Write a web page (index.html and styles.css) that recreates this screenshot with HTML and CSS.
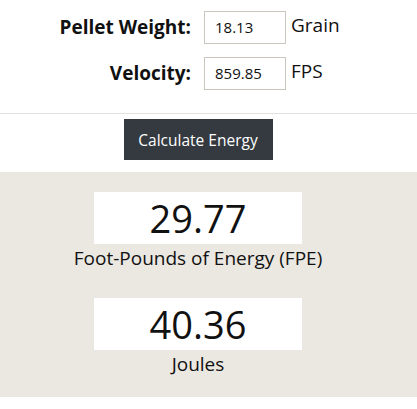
FILE: index.html
```html
<!DOCTYPE html>
<html>
<head>
<meta charset="utf-8">
<link rel="stylesheet" href="styles.css">
</head>
<body>
<div class="form">
  <div class="row">
    <label class="lbl">Pellet Weight:</label>
    <div class="inp">18.13</div>
    <span class="unit">Grain</span>
  </div>
  <div class="row">
    <label class="lbl">Velocity:</label>
    <div class="inp">859.85</div>
    <span class="unit">FPS</span>
  </div>
</div>
<div class="actions">
  <button class="btn">Calculate Energy</button>
</div>
<div class="results">
  <div class="result">
    <div class="value">29.77</div>
    <div class="caption">Foot-Pounds of Energy (FPE)</div>
  </div>
  <div class="result">
    <div class="value">40.36</div>
    <div class="caption">Joules</div>
  </div>
</div>
</body>
</html>
```
FILE: styles.css
```css
html, body { margin: 0; padding: 0; background: #fff; }
body { font-family: "Open Sans", sans-serif; color: #111; width: 417px; height: 409px; overflow: hidden; }
.form { padding-top: 11px; height: 114px; box-sizing: border-box; border-bottom: 1px solid #e2e0dc; display: flex; flex-direction: column; gap: 13px; }
.row { display: flex; align-items: flex-start; height: 33px; }
.lbl { width: 191px; text-align: right; font-weight: 700; font-size: 19px; line-height: 33px; }
.inp { margin-left: 13px; width: 82px; height: 33px; box-sizing: border-box; border: 1px solid #cbc6bd; padding-left: 10px; font-size: 15px; line-height: 31px; }
.unit { margin-left: 5px; font-size: 19px; line-height: 29px; }
.actions { height: 58px; display: flex; justify-content: center; align-items: flex-start; padding: 5px 21px 0 0; box-sizing: border-box; }
.btn { width: 149px; height: 41px; background: #343a40; color: #fff; border: 0; font-family: "Open Sans", sans-serif; font-size: 15.5px; padding: 0; }
.results { background: #ebe8e2; height: 225px; padding: 20px 21px 0 0; box-sizing: border-box; display: flex; flex-direction: column; align-items: center; gap: 25.5px; }
.result { display: flex; flex-direction: column; align-items: center; }
.value { width: 208px; height: 52px; background: #fff; text-align: center; font-size: 38px; line-height: 52px; }
.caption { font-size: 19px; line-height: 28.5px; }
```
